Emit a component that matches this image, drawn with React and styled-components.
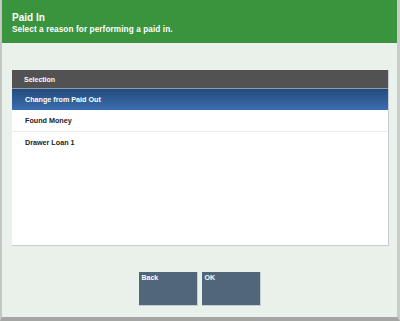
import React from 'react';
import styled, { createGlobalStyle } from 'styled-components';

const GlobalStyle = createGlobalStyle`
  html, body {
    margin: 0;
    padding: 0;
    background: #eaf1ea;
  }
  body {
    font-family: "Liberation Sans", Arial, sans-serif;
  }
`;

const Screen = styled.div`
  width: 400px;
  height: 321px;
  box-sizing: border-box;
  display: flex;
  flex-direction: column;
  background: #eaf1ea;
  border-left: 2px solid #c4c8c4;
  border-right: 3px solid #c9cdc9;
  border-bottom: 4px solid #a4a6a4;
  overflow: hidden;
`;

const Header = styled.div`
  background: #3a943e;
  height: 43px;
  box-sizing: border-box;
  padding: 11px 0 0 10px;
  color: #ffffff;
  font-weight: bold;
`;

const Title = styled.div`
  font-size: 10px;
  line-height: 13px;
`;

const Subtitle = styled.div`
  font-size: 8.2px;
  line-height: 12px;
  letter-spacing: 0.1px;
`;

const Body = styled.div`
  flex: 1;
  display: flex;
  flex-direction: column;
  padding: 27px 8px 0 10px;
`;

const Panel = styled.div`
  height: 175px;
  background: #ffffff;
  border-right: 1px solid #c8ccd4;
  border-bottom: 1px solid #c8ccd4;
  display: flex;
  flex-direction: column;
`;

const PanelHead = styled.div`
  height: 18px;
  background: #525252;
  border-bottom: 1px solid #8a9ab0;
  color: #ffffff;
  font-size: 7px;
  font-weight: bold;
  display: flex;
  align-items: center;
  padding-left: 12px;
`;

const Row = styled.div`
  height: 21px;
  display: flex;
  align-items: center;
  padding-left: 13px;
  font-size: 7.2px;
  font-weight: bold;
  color: ${p => (p.selected ? '#ffffff' : '#222222')};
  background: ${p =>
    p.selected ? 'linear-gradient(#244a7a, #3a6fb0)' : '#ffffff'};
  border-bottom: ${p => (p.divider ? '1px solid #ececec' : 'none')};
`;

const Actions = styled.div`
  display: flex;
  justify-content: center;
  gap: 4px;
  margin-top: 26px;
  padding-right: 2px;
`;

const Button = styled.div`
  width: 59px;
  height: 34px;
  box-sizing: border-box;
  background: #52667a;
  border-right: 1px solid #c4ccd4;
  border-bottom: 1px solid #c4ccd4;
  color: #ffffff;
  font-size: 7px;
  font-weight: bold;
  padding: 2px 3px;
`;

const items = [
  { label: 'Change from Paid Out', selected: true },
  { label: 'Found Money', divider: true },
  { label: 'Drawer Loan 1' },
];

export default function App() {
  return (
    <>
      <GlobalStyle />
      <Screen>
        <Header>
          <Title>Paid In</Title>
          <Subtitle>Select a reason for performing a paid in.</Subtitle>
        </Header>
        <Body>
          <Panel>
            <PanelHead>Selection</PanelHead>
            {items.map(it => (
              <Row key={it.label} selected={it.selected} divider={it.divider}>
                {it.label}
              </Row>
            ))}
          </Panel>
          <Actions>
            <Button>Back</Button>
            <Button>OK</Button>
          </Actions>
        </Body>
      </Screen>
    </>
  );
}
